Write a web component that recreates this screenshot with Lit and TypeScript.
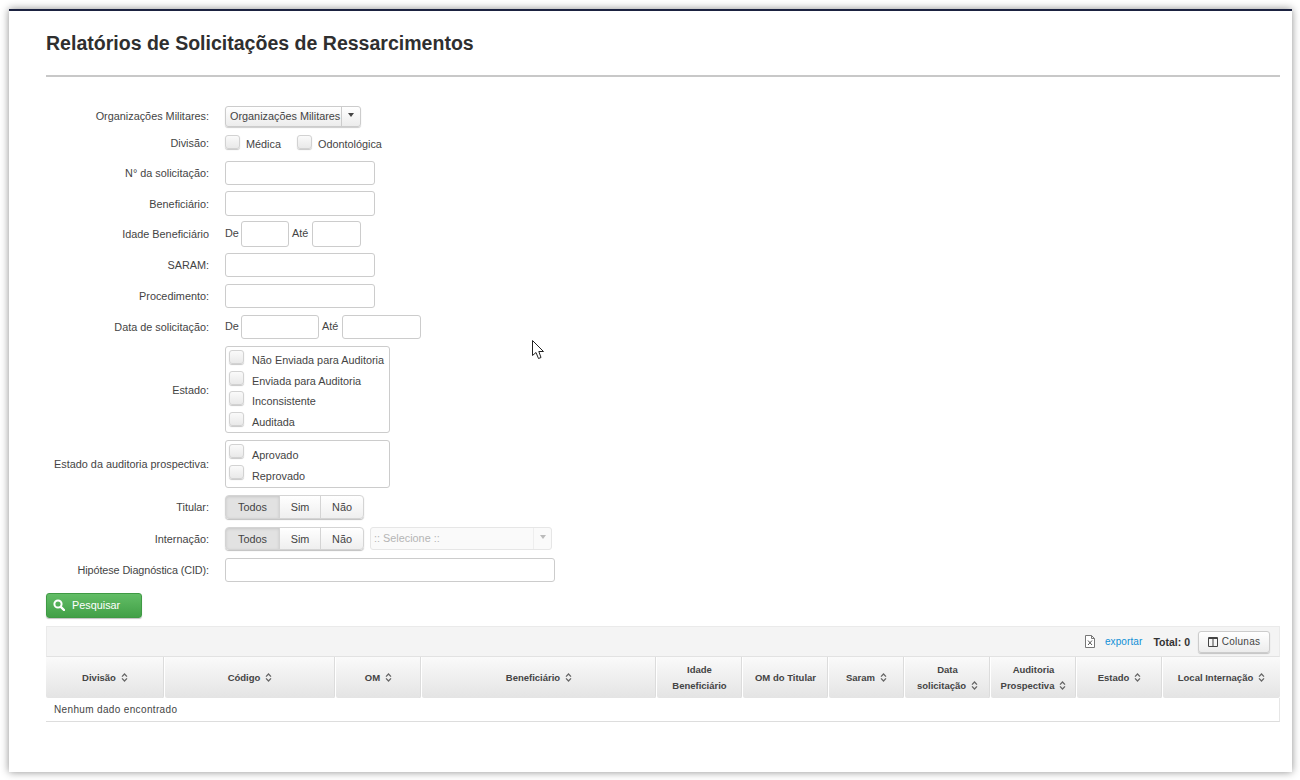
import { LitElement, css, html, svg } from 'lit';
import { customElement } from 'lit/decorators.js';

const sortIcon = html`<svg class="sort" width="7" height="9" viewBox="0 0 7 9">
  <path d="M1 3.6 L3.5 1 L6 3.6 M1 5.4 L3.5 8 L6 5.4" fill="none" stroke="#666" stroke-width="1.3"/>
</svg>`;

const COLUMNS: { lines: string[]; sort: boolean }[] = [
  { lines: ['Divisão'], sort: true },
  { lines: ['Código'], sort: true },
  { lines: ['OM'], sort: true },
  { lines: ['Beneficiário'], sort: true },
  { lines: ['Idade', 'Beneficiário'], sort: false },
  { lines: ['OM do Titular'], sort: false },
  { lines: ['Saram'], sort: true },
  { lines: ['Data', 'solicitação'], sort: true },
  { lines: ['Auditoria', 'Prospectiva'], sort: true },
  { lines: ['Estado'], sort: true },
  { lines: ['Local Internação'], sort: true },
];

@customElement('app-root')
export class AppRoot extends LitElement {
  static styles = css`
    :host {
      display: block;
      font-family: "Liberation Sans", Arial, sans-serif;
      font-size: 10.85px;
      color: #333;
      padding: 9px 8px 8px 9px;
      height: 763px;
      position: relative;
    }
    .card {
      height: 763px;
      box-sizing: border-box;
      border-top: 2px solid #1b2240;
      background: #fff;
      box-shadow: 0 0 8px rgba(0, 0, 0, 0.45);
      padding: 0 12px 0 37px;
    }
    h1 {
      margin: 0;
      padding-top: 19px;
      height: 26px;
      font-size: 19.55px;
      line-height: 26px;
      font-weight: bold;
      color: #2f2f2f;
    }
    hr {
      margin: 19px 0 29px;
      border: 0;
      height: 2px;
      background: #c8c8c8;
    }
    .form {
      display: flex;
      flex-direction: column;
      gap: 7px;
    }
    .row {
      display: grid;
      grid-template-columns: 163px auto;
      column-gap: 16px;
      align-items: center;
      justify-content: start;
    }
    .row.first .label { margin-top: -1px; }
    .row.divisao { align-items: start; height: 16px; margin-top: 1px; }
    .row.divisao .label { padding-top: 2px; }
    .gap5 { margin-top: -2px; }
    .gap6 { margin-top: -1px; }
    .gap8 { margin-top: 1px; }
    .gap10 { margin-top: 3px; }
    .label {
      text-align: right;
      color: #444;
      white-space: nowrap;
    }
    .label.tight { letter-spacing: -0.11px; }
    .controls {
      display: flex;
      align-items: center;
    }
    .text {
      box-sizing: border-box;
      height: 24px;
      width: 150px;
      border: 1px solid #ccc;
      border-radius: 3px;
      background: #fff;
      display: block;
      padding: 0;
    }
    .text.tall { height: 25px; }
    .text.age { width: 48px; height: 26px; }
    .text.age2 { width: 49px; height: 26px; }
    .text.date { width: 78px; }
    .text.date2 { width: 79px; }
    .text.wide { width: 330px; }
    .de { width: 16px; margin-top: -2px; color: #444; }
    .ate { width: 17px; margin: -2px 3px 0 3px; color: #444; }
    .drop {
      display: flex;
      height: 21px;
      box-sizing: border-box;
      width: 136px;
      border: 1px solid #ccc;
      border-radius: 3px;
      background: linear-gradient(#fff, #ececec);
      box-shadow: 0 1px 1px rgba(0, 0, 0, 0.2);
      align-items: center;
      color: #444;
    }
    .drop span { padding: 0 0 1px 4px; flex: 1; min-width: 0; white-space: nowrap; }
    .drop i {
      flex: none;
      width: 18px;
      height: 19px;
      border-left: 1px solid #ccc;
      display: flex;
      align-items: center;
      justify-content: center;
    }
    .caret {
      display: block;
      width: 0;
      height: 0;
      margin-top: -3px;
      border: 3.5px solid transparent;
      border-top: 4px solid #444;
      border-bottom: 0;
    }
    .box {
      display: block;
      flex: none;
      box-sizing: border-box;
      width: 15px;
      height: 14px;
      border: 1px solid #d2d2d2;
      border-radius: 3px;
      background: linear-gradient(#fafafa, #e9e9e9);
      box-shadow: 0 1px 1px rgba(0, 0, 0, 0.22);
    }
    .inline-check {
      display: flex;
      align-items: flex-end;
      color: #444;
      height: 15px;
    }
    .inline-check .box { margin-right: 6px; align-self: flex-start; }
    .inline-check + .inline-check { margin-left: 16px; }
    .checks {
      box-sizing: border-box;
      width: 165px;
      border: 1px solid #ccc;
      border-radius: 3px;
      padding: 3px 3px 0;
    }
    .checks.two { padding-bottom: 1px; }
    .checks div {
      display: flex;
      height: 20.5px;
      color: #444;
    }
    .checks.two div { height: 21px; }
    .checks .box { margin-right: 8px; }
    .checks span { padding-top: 4px; white-space: nowrap; }
    .checks.two span { padding-top: 5px; }
    .btns {
      display: flex;
      height: 24px;
      border-radius: 4px;
      box-shadow: 0 1px 1px rgba(0, 0, 0, 0.25);
    }
    .btns.short { height: 23px; }
    .btns button {
      font: inherit;
      color: #444;
      border: 1px solid #d4d4d4;
      margin: 0;
      margin-left: -1px;
      padding: 0;
      height: 100%;
      background: linear-gradient(#fff, #efefef);
      width: 42px;
    }
    .btns button:first-child {
      margin-left: 0;
      width: 55px;
      border-radius: 4px 0 0 4px;
      background: #e2e2e2;
      box-shadow: inset 0 1px 3px rgba(0, 0, 0, 0.12);
    }
    .btns button:last-child {
      width: 44px;
      border-radius: 0 4px 4px 0;
    }
    .select {
      margin-left: 6px;
      box-sizing: border-box;
      width: 182px;
      height: 23px;
      display: flex;
      align-items: center;
      border: 1px solid #e6e6e6;
      border-radius: 3px;
      color: #b5b5b5;
      padding-left: 3px;
      background: #fafafa;
    }
    .select span { flex: 1; padding-bottom: 2px; }
    .select i {
      width: 17px;
      height: 21px;
      display: flex;
      align-items: center;
      justify-content: center;
      border-left: 1px solid #eee;
    }
    .select .caret { border-top-color: #bbb; }
    .search {
      display: flex;
      align-items: center;
      box-sizing: border-box;
      margin-top: 11px;
      width: 96px;
      height: 25px;
      padding: 0 0 1px 6px;
      gap: 7px;
      color: #fff;
      font: inherit;
      border: 1px solid #3f9a44;
      border-radius: 3px;
      background: linear-gradient(#62bd66, #42a047);
      box-shadow: 0 1px 1px rgba(0, 0, 0, 0.25);
    }
    .toolbar {
      margin-top: 8px;
      box-sizing: border-box;
      height: 31px;
      display: flex;
      align-items: center;
      justify-content: flex-end;
      background: #f4f4f4;
      border: 1px solid #eaeaea;
      border-bottom: 1px solid #e2e2e2;
      padding-right: 9px;
    }
    .xls { margin-right: 10px; }
    .toolbar a { color: #0f8fd6; font-size: 10px; letter-spacing: 0.1px; }
    .total { font-weight: bold; margin: 0 8px 0 11px; font-size: 10.5px; }
    .cols {
      display: flex;
      align-items: center;
      justify-content: center;
      gap: 4px;
      box-sizing: border-box;
      font: inherit;
      font-size: 10px;
      letter-spacing: 0.25px;
      color: #444;
      width: 72px;
      height: 22px;
      padding: 0;
      border: 1px solid #ccc;
      border-radius: 3px;
      background: linear-gradient(#fff, #ececec);
      box-shadow: 0 1px 1px rgba(0, 0, 0, 0.2);
    }
    .head {
      display: grid;
      grid-template-columns: 119px 171px 86px 235px 86px 86px 76px 86px 86px 86px 117px;
      height: 41px;
    }
    .th {
      display: flex;
      flex-direction: column;
      align-items: center;
      justify-content: center;
      text-align: center;
      font-weight: bold;
      font-size: 9.5px;
      line-height: 16px;
      color: #444;
      background: linear-gradient(#fafafa, #e4e4e4);
      border-right: 1px solid #fff;
      box-shadow: inset -1px 0 0 #dcdcdc;
      border-radius: 0 0 2px 2px;
    }
    .th:last-child { box-shadow: none; border-right: 0; }
    .sort { margin-left: 5px; vertical-align: -1px; }
    .empty {
      box-sizing: border-box;
      height: 24px;
      padding: 6px 8px 0;
      font-size: 10px;
      letter-spacing: 0.35px;
      color: #444;
      border-bottom: 1px solid #ddd;
      border-right: 1px solid #e6e6e6;
    }
    .cursor {
      position: absolute;
      left: 532px;
      top: 340px;
    }
  `;

  private check(label: string) {
    return html`<label class="inline-check"><span class="box"></span>${label}</label>`;
  }

  private checkList(items: string[], cls = '') {
    return html`<div class="checks ${cls}">
      ${items.map((item) => html`<div><b class="box"></b><span>${item}</span></div>`)}
    </div>`;
  }

  private buttons(cls = '') {
    return html`<div class="btns ${cls}"><button>Todos</button><button>Sim</button><button>Não</button></div>`;
  }

  render() {
    return html`
      <div class="card">
        <h1>Relatórios de Solicitações de Ressarcimentos</h1>
        <hr />
        <div class="form">
          <div class="row first">
            <div class="label">Organizações Militares:</div>
            <div class="controls">
              <div class="drop"><span>Organizações Militares</span><i><b class="caret"></b></i></div>
            </div>
          </div>
          <div class="row divisao">
            <div class="label">Divisão:</div>
            <div class="controls">${this.check('Médica')}${this.check('Odontológica')}</div>
          </div>
          <div class="row gap10">
            <div class="label">N° da solicitação:</div>
            <div class="controls"><input class="text" /></div>
          </div>
          <div class="row gap6">
            <div class="label">Beneficiário:</div>
            <div class="controls"><input class="text tall" /></div>
          </div>
          <div class="row gap5">
            <div class="label">Idade Beneficiário</div>
            <div class="controls">
              <span class="de">De</span><input class="text age" />
              <span class="ate">Até</span><input class="text age2" />
            </div>
          </div>
          <div class="row gap6">
            <div class="label">SARAM:</div>
            <div class="controls"><input class="text" /></div>
          </div>
          <div class="row">
            <div class="label">Procedimento:</div>
            <div class="controls"><input class="text" /></div>
          </div>
          <div class="row">
            <div class="label">Data de solicitação:</div>
            <div class="controls">
              <span class="de">De</span><input class="text date" />
              <span class="ate">Até</span><input class="text date2" />
            </div>
          </div>
          <div class="row">
            <div class="label">Estado:</div>
            <div class="controls">
              ${this.checkList(['Não Enviada para Auditoria', 'Enviada para Auditoria', 'Inconsistente', 'Auditada'])}
            </div>
          </div>
          <div class="row">
            <div class="label">Estado da auditoria prospectiva:</div>
            <div class="controls">${this.checkList(['Aprovado', 'Reprovado'], 'two')}</div>
          </div>
          <div class="row">
            <div class="label">Titular:</div>
            <div class="controls">${this.buttons()}</div>
          </div>
          <div class="row gap8">
            <div class="label">Internação:</div>
            <div class="controls">
              ${this.buttons('short')}
              <div class="select"><span>:: Selecione ::</span><i><b class="caret"></b></i></div>
            </div>
          </div>
          <div class="row gap8">
            <div class="label tight">Hipótese Diagnóstica (CID):</div>
            <div class="controls"><input class="text wide" /></div>
          </div>
        </div>
        <button class="search">
          <svg width="12" height="12" viewBox="0 0 12 12">
            <circle cx="5" cy="5" r="3.6" fill="none" stroke="#fff" stroke-width="2" />
            <path d="M7.8 7.8 L11 11" stroke="#fff" stroke-width="2.4" stroke-linecap="round" />
          </svg>
          Pesquisar
        </button>
        <div class="toolbar">
          <svg class="xls" width="10" height="13" viewBox="0 0 10 13">
            <path d="M0.5 0.5 H6.5 L9.5 3.5 V12.5 H0.5 Z M6.5 0.5 V3.5 H9.5" fill="#fff" stroke="#777" />
            <path d="M3 5.5 L7 10 M7 5.5 L3 10" stroke="#555" stroke-width="1" />
          </svg>
          <a>exportar</a>
          <span class="total">Total: 0</span>
          <button class="cols">
            <svg width="10" height="10" viewBox="0 0 10 10">
              <path d="M0.5 0.5 H9.5 V9.5 H0.5 Z M5 1 V9" fill="none" stroke="#444" />
              <path d="M0.5 1.5 H9.5" stroke="#444" />
            </svg>
            Colunas
          </button>
        </div>
        <div class="head">
          ${COLUMNS.map((c) => html`<div class="th">
            ${c.lines.map((line, i) => html`<div>${line}${c.sort && i === c.lines.length - 1 ? sortIcon : ''}</div>`)}
          </div>`)}
        </div>
        <div class="empty">Nenhum dado encontrado</div>
      </div>
      <svg class="cursor" width="13" height="20" viewBox="0 0 13 20">
        ${svg`<path d="M0.5 0.5 V15.5 L4 12.5 L6.5 18.5 L9 17.5 L6.8 11.5 L11.5 11.5 Z" fill="#fff" stroke="#222" stroke-width="1"/>`}
      </svg>
    `;
  }
}
